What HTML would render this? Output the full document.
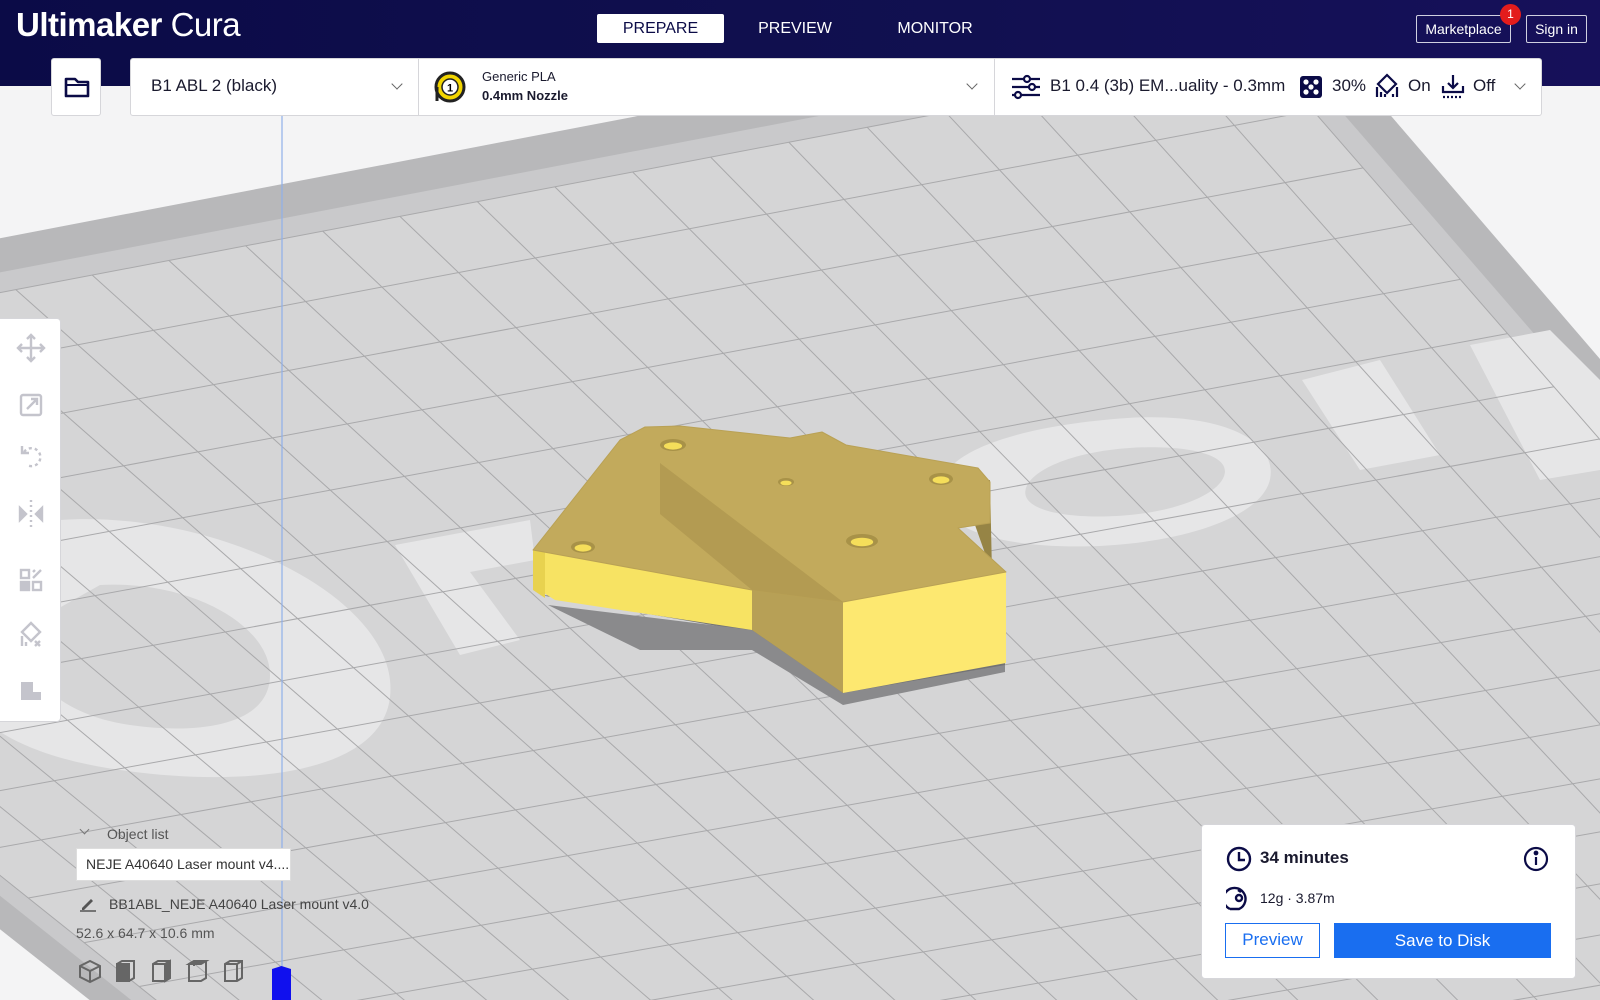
<!DOCTYPE html>
<html><head><meta charset="utf-8">
<style>
*{margin:0;padding:0;box-sizing:border-box}
html,body{width:1600px;height:1000px;overflow:hidden}
body{background:#f4f4f5;font-family:"Liberation Sans",sans-serif;position:relative}
#hdr{position:absolute;left:0;top:0;width:1600px;height:86px;background:linear-gradient(90deg,#0b0b47,#111050 60%,#16105a)}
.logo{position:absolute;left:16px;top:6px;color:#fff;font-size:33px;letter-spacing:-0.5px}
.logo b{font-weight:bold}
.tab{position:absolute;top:14px;height:29px;color:#fff;font-size:16px;line-height:29px;text-align:center}
.tab.on{background:#fff;color:#0b0b47;border-radius:2px}
.hbtn{position:absolute;top:15px;height:28px;border:1px solid #d0d0e0;border-radius:2px;color:#fff;font-size:14px;line-height:26px;text-align:center}
.badge{position:absolute;left:1500px;top:4px;width:21px;height:21px;border-radius:50%;background:#e31c1c;color:#fff;font-size:12px;text-align:center;line-height:21px}
.box{position:absolute;background:#fff;border:1px solid #d6d6da;border-radius:3px}
.t{position:absolute;color:#1a1a2e;white-space:nowrap}
.chev{position:absolute;width:8px;height:8px;border-right:1.5px solid #666;border-bottom:1.5px solid #666;transform:rotate(45deg)}
</style></head><body>
<svg id="vp" width="1600" height="1000" style="position:absolute;left:0;top:0">
<g id="plate"></g>
</svg>
<div id="hdr">
 <div class="logo"><b>Ultimaker</b> Cura</div>
 <div class="tab on" style="left:597px;width:127px">PREPARE</div>
 <div class="tab" style="left:750px;width:090px">PREVIEW</div>
 <div class="tab" style="left:890px;width:090px">MONITOR</div>
 <div class="hbtn" style="left:1416px;width:95px">Marketplace</div>
 <div class="badge">1</div>
 <div class="hbtn" style="left:1526px;width:61px">Sign in</div>
</div>
<div class="box" style="left:51px;top:58px;width:50px;height:58px">
 <svg width="50" height="58" style="position:absolute;left:0;top:0"><path d="M14 20h9l3 3h10v14H14z" fill="none" stroke="#0b0b47" stroke-width="2.6" stroke-linejoin="round"/><path d="M14 26h22" stroke="#0b0b47" stroke-width="2"/></svg>
</div>
<div class="box" style="left:130px;top:58px;width:1412px;height:58px"></div>
<div style="position:absolute;left:418px;top:59px;width:1px;height:56px;background:#d6d6da"></div>
<div style="position:absolute;left:994px;top:59px;width:1px;height:56px;background:#d6d6da"></div>
<div class="t" style="left:151px;top:76px;font-size:17px">B1 ABL 2 (black)</div>
<div class="chev" style="left:393px;top:80px"></div>
<svg width="36" height="36" style="position:absolute;left:432px;top:69px"><circle cx="18" cy="18" r="14" fill="#f2d500" stroke="#222" stroke-width="3"/><circle cx="18" cy="18" r="8" fill="#fff" stroke="#222" stroke-width="1.5"/><text x="18" y="22.5" font-size="11" font-weight="bold" text-anchor="middle" font-family="Liberation Sans">1</text><path d="M5 18v14" stroke="#222" stroke-width="3"/></svg>
<div class="t" style="left:482px;top:69px;font-size:13px">Generic PLA</div>
<div class="t" style="left:482px;top:88px;font-size:13px;font-weight:bold">0.4mm Nozzle</div>
<div class="chev" style="left:968px;top:80px"></div>
<svg width="32" height="28" style="position:absolute;left:1010px;top:73px" stroke="#0b0b47" stroke-width="2.2" fill="none"><path d="M2 6h28M2 14h28M2 22h28"/><circle cx="17" cy="6" r="3" fill="#fff"/><circle cx="22" cy="14" r="3" fill="#fff"/><circle cx="8" cy="22" r="3" fill="#fff"/></svg>
<div class="t" style="left:1050px;top:76px;font-size:17px">B1 0.4 (3b) EM...uality - 0.3mm</div>
<svg width="24" height="24" style="position:absolute;left:1299px;top:75px"><rect x="1" y="1" width="22" height="22" rx="3" fill="#0b0b47"/><g fill="#fff"><circle cx="7" cy="7" r="2.6"/><circle cx="17" cy="7" r="2.6"/><circle cx="7" cy="17" r="2.6"/><circle cx="17" cy="17" r="2.6"/><circle cx="12" cy="12" r="2.6"/></g></svg>
<div class="t" style="left:1332px;top:76px;font-size:17px">30%</div>
<svg width="26" height="26" style="position:absolute;left:1374px;top:73px" stroke="#0b0b47" stroke-width="2.2" fill="none"><path d="M13 2l9 9-9 9-9-9z"/><path d="M3 14v10M7 19v5M11 21v3M19 21v3M23 14v10"/></svg>
<div class="t" style="left:1408px;top:76px;font-size:17px">On</div>
<svg width="26" height="26" style="position:absolute;left:1440px;top:73px" stroke="#0b0b47" stroke-width="2.2" fill="none"><path d="M13 2v12M8 10l5 5 5-5M3 13v6h20v-6"/><path d="M3 24h20" stroke-dasharray="2 2"/></svg>
<div class="t" style="left:1473px;top:76px;font-size:17px">Off</div>
<div class="chev" style="left:1516px;top:80px"></div>
<div class="box" style="left:-4px;top:318px;width:65px;height:404px;border-radius:4px"></div>
<svg width="60" height="404" style="position:absolute;left:0;top:318px" fill="none" stroke="#c4c4cc" stroke-width="2.4">
<path d="M31 17v26M18 30h26M27 21l4-4 4 4M27 39l4 4 4-4M22 26l-4 4 4 4M40 26l4 4-4 4"/>
<rect x="21" y="77" width="20" height="20" rx="2"/><path d="M27 91l10-10M31 81h6v6"/>
<path d="M24 134a9 9 0 1 1 3 13" stroke-dasharray="3 3"/><path d="M22 128v7h7"/>
<path d="M31 182v28" stroke-dasharray="2 3"/><path d="M20 190l6 6-6 6zM42 190l-6 6 6 6z" fill="#c4c4cc"/>
<rect x="21" y="252" width="8" height="8"/><rect x="33" y="264" width="8" height="8"/><rect x="21" y="264" width="8" height="8" fill="#c4c4cc"/><path d="M33 260l8-8M35 252l-2 2"/>
<path d="M31 305l9 9-9 9-9-9z"/><path d="M22 318v10M26 324v4M35 323l5 5M40 323l-5 5"/>
<path d="M21 364v18h20v-8h-8v-10z" fill="#c4c4cc" stroke="none"/>
</svg>
<div class="chev" style="left:81px;top:826px;width:7px;height:7px;border-color:#777"></div>
<div class="t" style="left:107px;top:826px;font-size:14px;color:#555">Object list</div>
<div style="position:absolute;left:76px;top:848px;width:215px;height:33px;background:#fff;border:1px solid #ddd"></div>
<div class="t" style="left:86px;top:856px;font-size:14px;color:#333">NEJE A40640 Laser mount v4....</div>
<svg width="20" height="16" style="position:absolute;left:78px;top:896px"><path d="M4 12l9-9 2 2-9 9H4z" fill="#555"/><path d="M2 15h16" stroke="#555" stroke-width="1.5"/></svg>
<div class="t" style="left:109px;top:896px;font-size:14px;color:#444">BB1ABL_NEJE A40640 Laser mount v4.0</div>
<div class="t" style="left:76px;top:925px;font-size:14px;color:#555">52.6 x 64.7 x 10.6 mm</div>
<svg width="170" height="30" style="position:absolute;left:78px;top:959px" fill="none" stroke="#666" stroke-width="2">
<path d="M12 2l10 5v11l-10 5-10-5V7zM2 7l10 5 10-5M12 12v11"/>
<g transform="translate(36,0)"><path d="M3 5l5-3h12v17l-5 3H3z"/><path d="M3 5h12v17H3z" fill="#666"/></g>
<g transform="translate(72,0)"><path d="M3 5l5-3h12v17l-5 3H3z"/><path d="M3 5h12v17" /><path d="M15 5l5-3v17l-5 3z" fill="#666"/></g>
<g transform="translate(108,0)"><path d="M3 5l5-3h12v17l-5 3H3z"/><path d="M3 5l5-3h12l-5 3z" fill="#666"/><path d="M8 2v5"/></g>
<g transform="translate(144,0)"><path d="M3 5l5-3h12v17l-5 3H3z"/><path d="M3 5h12v17M15 5l5-3"/></g>
</svg>
<div style="position:absolute;left:272px;top:966px;width:19px;height:34px;background:#1010ee;clip-path:polygon(0 3px,50% 0,100% 3px,100% 100%,0 100%)"></div>
<div class="box" style="left:1201px;top:824px;width:375px;height:155px;border-radius:4px"></div>
<svg width="26" height="26" style="position:absolute;left:1226px;top:846px" fill="none" stroke="#0b0b47" stroke-width="2.4"><circle cx="13" cy="13" r="11"/><path d="M13 6v8h6"/></svg>
<div class="t" style="left:1260px;top:848px;font-size:17px;font-weight:bold">34 minutes</div>
<svg width="26" height="26" style="position:absolute;left:1523px;top:846px" fill="none" stroke="#0b0b47" stroke-width="2.2"><circle cx="13" cy="13" r="11"/><path d="M13 11v8"/><circle cx="13" cy="7" r="1.3" fill="#0b0b47"/></svg>
<svg width="26" height="28" style="position:absolute;left:1226px;top:885px" fill="none" stroke="#0b0b47" stroke-width="2.4"><path d="M4 24A11 11 0 1 1 13 24H4"/><circle cx="13" cy="13" r="3"/><path d="M12 5l3 2"/></svg>
<div class="t" style="left:1260px;top:890px;font-size:14px">12g · 3.87m</div>
<div style="position:absolute;left:1225px;top:923px;width:95px;height:35px;border:1.5px solid #196ef0;color:#196ef0;font-size:17px;text-align:center;line-height:32px">Preview</div>
<div style="position:absolute;left:1334px;top:923px;width:217px;height:35px;background:#196ef0;color:#fff;font-size:17px;text-align:center;line-height:35px">Save to Disk</div>
<script>
(function(){
function solve(A,b){var n=b.length;for(var i=0;i<n;i++){var m=i;for(var r=i+1;r<n;r++)if(Math.abs(A[r][i])>Math.abs(A[m][i]))m=r;var t=A[i];A[i]=A[m];A[m]=t;t=b[i];b[i]=b[m];b[m]=t;for(var r=i+1;r<n;r++){var f=A[r][i]/A[i][i];for(var c=i;c<n;c++)A[r][c]-=f*A[i][c];b[r]-=f*b[i];}}var x=new Array(n);for(var i=n-1;i>=0;i--){var s=b[i];for(var c=i+1;c<n;c++)s-=A[i][c]*x[c];x[i]=s/A[i][i];}return x;}
var src=[[0,0],[24,0],[24,24],[0,24]],dst=[[-589,405],[1262,52],[2263,1200],[732,1460]];
var A=[],b=[];for(var i=0;i<4;i++){var u=src[i][0],v=src[i][1],x=dst[i][0],y=dst[i][1];A.push([u,v,1,0,0,0,-u*x,-v*x]);b.push(x);A.push([0,0,0,u,v,1,-u*y,-v*y]);b.push(y);}
var h=solve(A,b);
function P(u,v){var w=h[6]*u+h[7]*v+1;return [(h[0]*u+h[1]*v+h[2])/w,(h[3]*u+h[4]*v+h[5])/w];}
function poly(pts,fill,extra){return '<polygon points="'+pts.map(function(p){return p[0].toFixed(1)+','+p[1].toFixed(1)}).join(' ')+'" fill="'+fill+'" '+(extra||'')+'/>';}
var s='';
s+=poly([P(-0.8,-0.8),P(24.8,-0.8),P(24.8,24.8),P(-0.8,24.8)],'#b8b8ba');
s+=poly([P(-0.3,-0.3),P(24.3,-0.3),P(24.3,24.3),P(-0.3,24.3)],'#c9c9cb');
s+=poly([P(0,0),P(24,0),P(24,24),P(0,24)],'#d5d5d6');
s+='<g fill="#e6e6e7">';
s+='<path fill-rule="evenodd" d="M1130 418c90 0 150 30 140 70s-100 60-190 55-150-30-140-70 100-55 190-55zM1130 448c-55 0-100 15-105 35s40 32 95 32 100-15 105-35-40-32-95-32z" transform="rotate(-4 1130 480)"/>';
s+='<polygon points="1302,380 1380,360 1440,455 1360,470"/>';
s+='<polygon points="1470,345 1550,330 1600,380 1600,470 1540,480"/>';
s+='<polygon points="395,545 530,520 535,560 470,572 520,640 460,655"/>';
s+='<path fill-rule="evenodd" d="M60 520c150 -10 320 70 330 160s-130 110-270 90-190-80-180-170zM100 585c90 -5 170 40 170 90s-70 60-140 50-110-50-110-95z"/>';
s+='</g>';
for(var i=0;i<=24;i++){var a=P(i,0),c=P(i,24);s+='<line x1="'+a[0]+'" y1="'+a[1]+'" x2="'+c[0]+'" y2="'+c[1]+'" stroke="#a9a9ab" stroke-width="1"/>';a=P(0,i);c=P(24,i);s+='<line x1="'+a[0]+'" y1="'+a[1]+'" x2="'+c[0]+'" y2="'+c[1]+'" stroke="#a9a9ab" stroke-width="1"/>';}
s+='<line x1="282" y1="115" x2="282" y2="1000" stroke="#8fb0ea" stroke-width="1.2"/>';
s+='<polygon points="540,595 752,632 843,700 1005,668 1005,600 850,640 760,610" fill="#737375"/>';
s+='<polygon points="548,605 640,650 752,650 843,705 1005,672 1005,665 843,693 752,630" fill="#8a8a8c"/>';
s+='<polygon points="533,550 752,590 752,630 555,600 536,588" fill="#f7e363"/>';
s+='<polygon points="533,550 545,552 545,598 533,590" fill="#e8d24f"/>';
s+='<polygon points="752,590 843,602 843,693 752,630" fill="#b7a056"/>';
s+='<polygon points="843,602 1006,572 1006,663 843,693" fill="#fde870"/>';
s+='<polygon points="975,483 990,480 992,573 975,525 958,527" fill="#968445"/>';
s+='<polygon points="533,550 620,440 645,427 680,426 790,438 822,432 846,445 978,468 990,482 990,523 958,528 1006,572 843,602 752,590" fill="#c2aa5c" stroke="#b9a155" stroke-width="1" stroke-linejoin="round"/>';
s+='<polygon points="660,463 660,514 752,590 843,602" fill="#b39b52"/>';
[[673,445,13,6],[583,547,12,6],[786,482,8,4],[941,479,12,6],[862,541,16,7]].forEach(function(e){s+='<ellipse cx="'+e[0]+'" cy="'+e[1]+'" rx="'+e[2]+'" ry="'+e[3]+'" fill="#a89248"/><ellipse cx="'+e[0]+'" cy="'+(e[1]+1)+'" rx="'+(e[2]*0.7)+'" ry="'+(e[3]*0.6)+'" fill="#f5de5a"/>';});
document.getElementById('plate').innerHTML=s;
})();
</script>
</body></html>
